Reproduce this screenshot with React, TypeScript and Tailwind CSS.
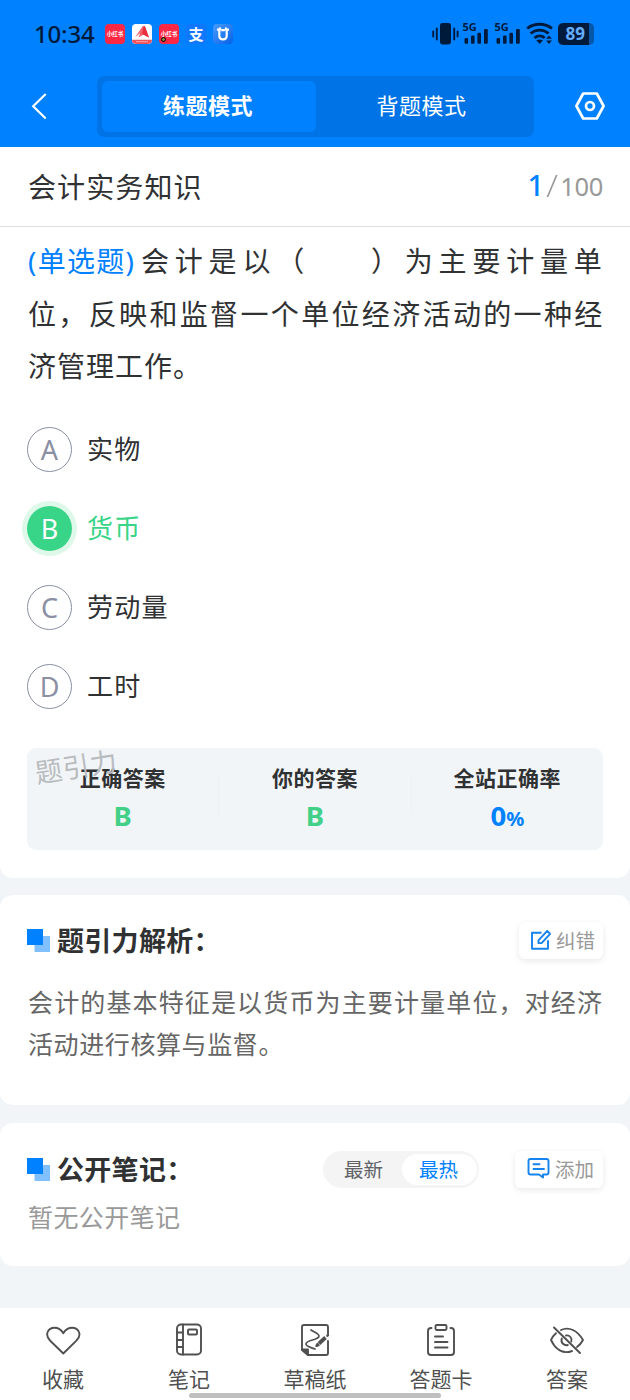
import type { ReactNode } from "react";

const options = [
  { key: "A", label: "实物", correct: false },
  { key: "B", label: "货币", correct: true },
  { key: "C", label: "劳动量", correct: false },
  { key: "D", label: "工时", correct: false },
];

function Signal() {
  return (
    <svg className="overflow-visible" width="26" height="24" viewBox="0 0 26 24" fill="#001a3b">
      <text x="-0.5" y="9" fontSize="11" fontWeight="700" fontFamily="Noto Sans">5G</text>
      <rect x="1.5" y="16" width="3.6" height="5.8" rx="1" />
      <rect x="8" y="13.4" width="3.6" height="8.4" rx="1" />
      <rect x="14.4" y="10.8" width="3.6" height="11" rx="1" />
      <rect x="21" y="7" width="3.8" height="14.8" rx="1" />
    </svg>
  );
}

function StatusBar() {
  return (
    <div className="flex h-[68px] items-center pr-[35px] pl-[34px] text-[#001a3b]">
      <span className="w-[62px] text-[24px] leading-[24px] font-medium tracking-[-0.200px]">10:34</span>
      <div className="ml-[9px] flex gap-[7px]">
        <span className="flex h-[20px] w-[20px] items-center justify-center rounded-[4px] bg-[#fe2844] text-[5.5px] font-bold text-white">
          小红书
        </span>
        <svg width="20" height="20" viewBox="0 0 20 20">
          <rect width="20" height="20" rx="4" fill="#fff" />
          <path d="M3 13.500 10.800 2 13 2.500 17 13.500l-5.500-3-5 3 1.700-4.500Z" fill="#f4616b" />
          <path d="m11.800 2-1.800 8 7 3.500L13 2.500Z" fill="#e8303f" />
          <path d="M0 15.700h20a4.2 4.2 0 0 1-4 4.3H4a4.2 4.2 0 0 1-4-4.3Z" fill="#f0525b" />
          <path d="M4 17.700h12" stroke="#fbb" strokeDasharray="1.6 .5" />
        </svg>
        <span className="relative flex h-[20px] w-[20px] items-center justify-center rounded-[4px] bg-[#fe2844] text-[5.5px] font-bold text-white">
          小红书
          <i className="absolute bottom-[2px] left-[2px] h-[5px] w-[5px] rounded-full border border-black bg-[#884]" />
        </span>
        <span className="flex h-[20px] w-[20px] items-center justify-center rounded-[4px] bg-[#1277ff] text-[15px] leading-[20px] font-bold text-white">
          支
        </span>
        <svg width="20" height="20" viewBox="0 0 20 20">
          <defs>
            <linearGradient id="u" x1="0" y1="0" x2="1" y2="1">
              <stop stopColor="#4a9cff" />
              <stop offset="1" stopColor="#0560e8" />
            </linearGradient>
          </defs>
          <rect width="20" height="20" rx="4" fill="url(#u)" />
          <path d="M4 5.700h3M13 5.700h3M6.300 6v5.500c0 5.200 7.400 5.200 7.400 0V6M8.200 6.200h3.600M7 3.500v3M13 3.500v3" fill="none" stroke="#fff" strokeWidth="2.200" />
        </svg>
      </div>
      <svg className="ml-auto" width="27" height="24" viewBox="0 0 27 24" fill="#001a3b">
        <rect x="8" y="1" width="11" height="21.5" rx="2.4" />
        <path d="M1.2 9.5v5M4.8 6.5v11M22.2 6.5v11M25.6 9.5v5" stroke="#001a3b" strokeWidth="1.9" strokeLinecap="round" />
      </svg>
      <div className="ml-[4px] flex gap-[6px]">
        <Signal />
        <Signal />
      </div>
      <svg className="ml-[5px]" width="27" height="24" viewBox="0 0 27 24" fill="none" stroke="#001a3b" strokeWidth="2.8">
        <path d="M1.200 6.500C8 .8 19.200 .8 26 6.500M4.600 11.500c5.200-4.600 12.800-4.600 18 0M8.500 16c3-2.700 7.200-2.700 10.200 0" />
        <path d="m10.200 18.200 3.500 3.800 3.300-3.800q-3.400-1.300-6.800 0Z" fill="#001a3b" stroke="none" />
        <path d="m20 16.800 3-3.300 3 3.300Zm0 1.800 3 3.300 3-3.300Z" fill="#001a3b" stroke="none" />
      </svg>
      <svg className="ml-[5px]" width="37" height="22" viewBox="0 0 37 22">
        <path d="M31 0q5 .5 5 5v12q0 4.500-5 5Z" fill="#0757a9" />
        <path d="M5 0h26v22H5q-5-.5-5-5V5q0-4.500 5-5Z" fill="#001a3b" />
        <text x="7.500" y="17.200" fill="#65adff" fontSize="17" fontWeight="700" fontFamily="Noto Sans">89</text>
      </svg>
    </div>
  );
}

function Header() {
  return (
    <header className="h-[147px] bg-[#0081ff]">
      <StatusBar />
      <div className="flex items-center pt-[8px] pr-[24px] pl-[31px]">
        <svg className="mb-[2px]" width="17" height="28" viewBox="0 0 17 28" fill="none" stroke="#fff" strokeWidth="2.2">
          <path d="M14.700 2 2.200 14.200 14.700 26.500" />
        </svg>
        <div className="ml-[49px] flex h-[61px] w-[437px] rounded-[7px] bg-[#0074e6] p-[5px] text-[22px] leading-[49px] tracking-[0.5px] text-white">
          <div className="h-[51px] w-[214px] rounded-[6px] bg-[#0081ff] pr-[2px] text-center font-bold">练题模式</div>
          <div className="flex-1 pr-[2px] text-center">背题模式</div>
        </div>
        <svg className="mb-px ml-auto" width="32" height="30" viewBox="0 0 32 30" fill="none" stroke="#fff" strokeWidth="2.700" strokeLinejoin="round">
          <path d="M9.200 2.500h13.600L29.600 15l-6.800 12.500H9.200L2.400 15Z" />
          <circle cx="16" cy="15" r="4" />
        </svg>
      </div>
    </header>
  );
}

function Option({ k, label, correct }: { k: string; label: string; correct: boolean }) {
  return (
    <div className="flex h-[79px] items-center">
      <span
        className={
          correct
            ? "flex h-[45px] w-[45px] items-center justify-center rounded-full bg-[#38d487] text-[27px] leading-none text-white ring-[5px] ring-[#def8e9]"
            : "flex h-[45px] w-[45px] items-center justify-center rounded-full border-[1.5px] border-[#8a8fa3] text-[27px] leading-none text-[#8a8fa3]"
        }
      >
        {k}
      </span>
      <span className={correct ? "ml-[15px] text-[26px] tracking-[1.200px] text-[#38d487]" : "ml-[15px] text-[26px] tracking-[1.200px] text-[#303133]"}>
        {label}
      </span>
    </div>
  );
}

function Stat({ title, children }: { title: string; children: ReactNode }) {
  return (
    <div className="flex-1 text-center">
      <div className="text-[21px] leading-[30px] font-bold tracking-[0.5px] text-[#303133]">{title}</div>
      <div className="mt-[5px] text-[27.500px] leading-[36px] font-bold">{children}</div>
    </div>
  );
}

function Heading({ children }: { children: ReactNode }) {
  return (
    <div className="flex items-center">
      <svg width="23" height="23" viewBox="0 0 23 23">
        <path d="M7.500 7H23v16H7.500Z" fill="#80c0ff" />
        <path d="M0 0h16v16H0Z" fill="#0081ff" />
      </svg>
      <h2 className="ml-[7px] text-[27px] leading-[36px] font-bold tracking-[0.300px] text-[#303133]">{children}</h2>
    </div>
  );
}

function NavItem({ label, children }: { label: string; children: ReactNode }) {
  return (
    <div className="flex flex-1 flex-col items-center">
      <svg width="36" height="36" viewBox="0 0 36 36" fill="none" stroke="#505050" strokeWidth="1.900" strokeLinejoin="round" strokeLinecap="round">
        {children}
      </svg>
      <span className="mt-[5px] text-[21px] leading-[32px] text-[#505050]">{label}</span>
    </div>
  );
}

export default function App() {
  return (
    <div className="flex h-[1400px] w-[630px] flex-col overflow-hidden bg-[#f1f5f8] font-['Noto_Sans','Noto_Sans_CJK_SC',sans-serif] whitespace-nowrap">
      <Header />
      <main>
        <section className="h-[731px] rounded-b-[13px] bg-white">
          <div className="flex h-[80px] items-center justify-between border-b border-[#dcdfe0] px-[28px]">
            <h1 className="text-[28px] tracking-[1.100px] text-[#303133]">会计实务知识</h1>
            <div className="flex items-baseline pb-[2px] text-[25.500px] leading-[40px] text-[#999]">
              <span className="text-[29px] font-medium text-[#0081ff]">1</span>
              <svg className="mx-[2px] self-center" width="12" height="26" viewBox="0 0 12 26" fill="none" stroke="#999" strokeWidth="1.700">
                <path d="M10.700 2 1.500 24" />
              </svg>
              <span className="-mr-px tracking-[-0.300px]">100</span>
            </div>
          </div>
          <div className="pt-[8px] pl-[28px] text-[28px] leading-[52.500px] text-[#303133]">
            <p className="flex">
              <span className="w-[113px] tracking-[1.300px] text-[#0081ff]">(单选题)</span>
              <span className="w-[170px] tracking-[5.800px]">会计是以（</span>
              <span className="ml-[60px] tracking-[5.800px]">）为主要计量单</span>
            </p>
            <p className="tracking-[2.350px]">位，反映和监督一个单位经济活动的一种经</p>
            <p className="tracking-[1px]">济管理工作。</p>
          </div>
          <div className="pt-[17px] pl-[27px]">
            {options.map((o) => (
              <Option key={o.key} k={o.key} label={o.label} correct={o.correct} />
            ))}
          </div>
          <div className="relative mx-[27px] mt-[22px] flex h-[102px] rounded-[9px] bg-[#f1f5f8] pt-[15px]">
            <span className="absolute -top-px left-[8px] -rotate-[9deg] text-[27px] leading-[40px] tracking-[0.500px] text-[#b9bcbf]">题引力</span>
            <Stat title="正确答案"><span className="text-[#42cf87]">B</span></Stat>
            <div className="mt-[12px] h-[40px] w-px bg-[#edf1f4]" />
            <Stat title="你的答案"><span className="text-[#42cf87]">B</span></Stat>
            <div className="mt-[12px] h-[40px] w-px bg-[#edf1f4]" />
            <Stat title="全站正确率">
              <span className="text-[#0081ff]">0<span className="text-[20px]">%</span></span>
            </Stat>
          </div>
        </section>

        <section className="mt-[17px] h-[210px] rounded-[13px] bg-white px-[27px] pt-[27px]">
          <div className="flex h-[37px] items-center justify-between">
            <Heading>题引力解析：</Heading>
            <button className="flex h-[37px] w-[84px] items-center rounded-[6px] bg-white pl-[11px] text-[19.500px] leading-[36px] text-[#999] shadow-[0_2px_6px_rgba(0,0,0,0.090)]">
              <svg className="mb-[2px]" width="22" height="22" viewBox="0 0 22 22" fill="none" stroke="#1684ee" strokeWidth="1.900" strokeLinejoin="round">
                <path d="M11.500 3.700H2v16h16v-8.500" />
                <path d="m8.500 11.300 8.700-9.400 2.900 2.900-8.500 9.300H8.500Z" />
              </svg>
              <span className="ml-[4px]">纠错</span>
            </button>
          </div>
          <div className="mt-[23px] ml-px text-[25px] leading-[41.500px] text-[#666]">
            <p className="tracking-[1.140px]">会计的基本特征是以货币为主要计量单位，对经济</p>
            <p className="tracking-[0.600px]">活动进行核算与监督。</p>
          </div>
        </section>

        <section className="mt-[18px] h-[143px] rounded-[13px] bg-white px-[27px] pt-[28px]">
          <div className="flex h-[37px] items-center">
            <Heading>公开笔记：</Heading>
            <div className="ml-auto flex h-[37px] w-[156px] items-center rounded-full bg-[#f4f4f5] pr-[2px] pl-[2px] text-[19.500px] leading-[31px] text-[#606266]">
              <span className="w-[77px] text-center">最新</span>
              <span className="h-[31px] w-[75px] rounded-full bg-white pr-[2px] text-center text-[#0081ff]">最热</span>
            </div>
            <button className="ml-[36px] flex h-[37px] w-[88px] items-center rounded-[6px] bg-white pl-[12px] text-[19.500px] leading-[36px] text-[#999] shadow-[0_2px_6px_rgba(0,0,0,0.090)]">
              <svg className="mb-[3px]" width="23" height="22" viewBox="0 0 23 22" fill="none" stroke="#1684ee" strokeWidth="1.900" strokeLinejoin="round" strokeLinecap="round">
                <path d="M3.500 2h16q2 0 2 2v11.500q0 2-2 2h-3.500v3l-4-3H3.500q-2 0-2-2V4q0-2 2-2ZM6.500 7.300h6M6.500 12h10.500" />
              </svg>
              <span className="ml-[5px]">添加</span>
            </button>
          </div>
          <p className="mt-[10px] ml-px text-[25px] leading-[38px] tracking-[0.400px] text-[#999]">暂无公开笔记</p>
        </section>
      </main>

      <nav className="relative mt-auto flex h-[92px] bg-white pt-[14px]">
        <NavItem label="收藏">
          <path d="M18.300 31.500 5.200 18.700C-.8 12.700 3 5.800 9.500 5.800c4.300 0 7.300 3 8.800 5.500 1.500-2.500 4.500-5.500 8.800-5.500 6.500 0 10.300 6.900 4.300 12.900Z" />
        </NavItem>
        <NavItem label="笔记">
          <rect x="6" y="2.500" width="24" height="30" rx="4" />
          <path d="M12 2.500v30M6 10.500h6M6 18h6M6 25h6" />
          <rect x="17" y="7.500" width="9" height="5" rx="1" />
        </NavItem>
        <NavItem label="草稿纸">
          <path d="M31 12V5q0-2-2-2H7q-2 0-2 2v23l6 5h18q2 0 2-2V19" />
          <path d="M5 27.500h6v5.500Z" fill="#505050" />
          <path d="M14 8c3 2 8 3.500 8 6 0 4.500-13 3.500-13 8 0 2.600 5 3.500 9 5" strokeWidth="1.700" />
          <path d="m22 21.500 6.500-6" strokeWidth="3.800" strokeLinecap="butt" />
          <path d="m19.500 23.800 1-1.800 1 1.200ZM30.300 13.800l.7-.6" fill="#505050" strokeWidth="2.400" />
        </NavItem>
        <NavItem label="答题卡">
          <path d="M8.500 6H8Q5 6 5 9v21q0 3 3 3h20q3 0 3-3V9q0-3-3-3h-.5" />
          <rect x="12.500" y="3" width="11" height="5" rx="1.200" />
          <path d="M12 14.500h8M12 20h12.500M12 25.500h12.500" />
        </NavItem>
        <NavItem label="答案">
          <path d="M5 5.500 31 31M12 8c8-3.800 16.500.5 22 10-1.500 2.800-3.500 5.300-6 7M23 29C14 32.500 6.500 27.500 2 18c1.200-3 2.600-4.800 5-6.800" />
          <path d="M17 13.500c3.500-.8 6.500 2.800 5.300 6M12.800 16.500c-1.500 4.500 2.500 7.500 6 6.500" />
        </NavItem>
        <div className="absolute bottom-[2px] left-[189px] h-[5px] w-[252px] rounded-full bg-[#bfbfbf]" />
      </nav>
    </div>
  );
}
